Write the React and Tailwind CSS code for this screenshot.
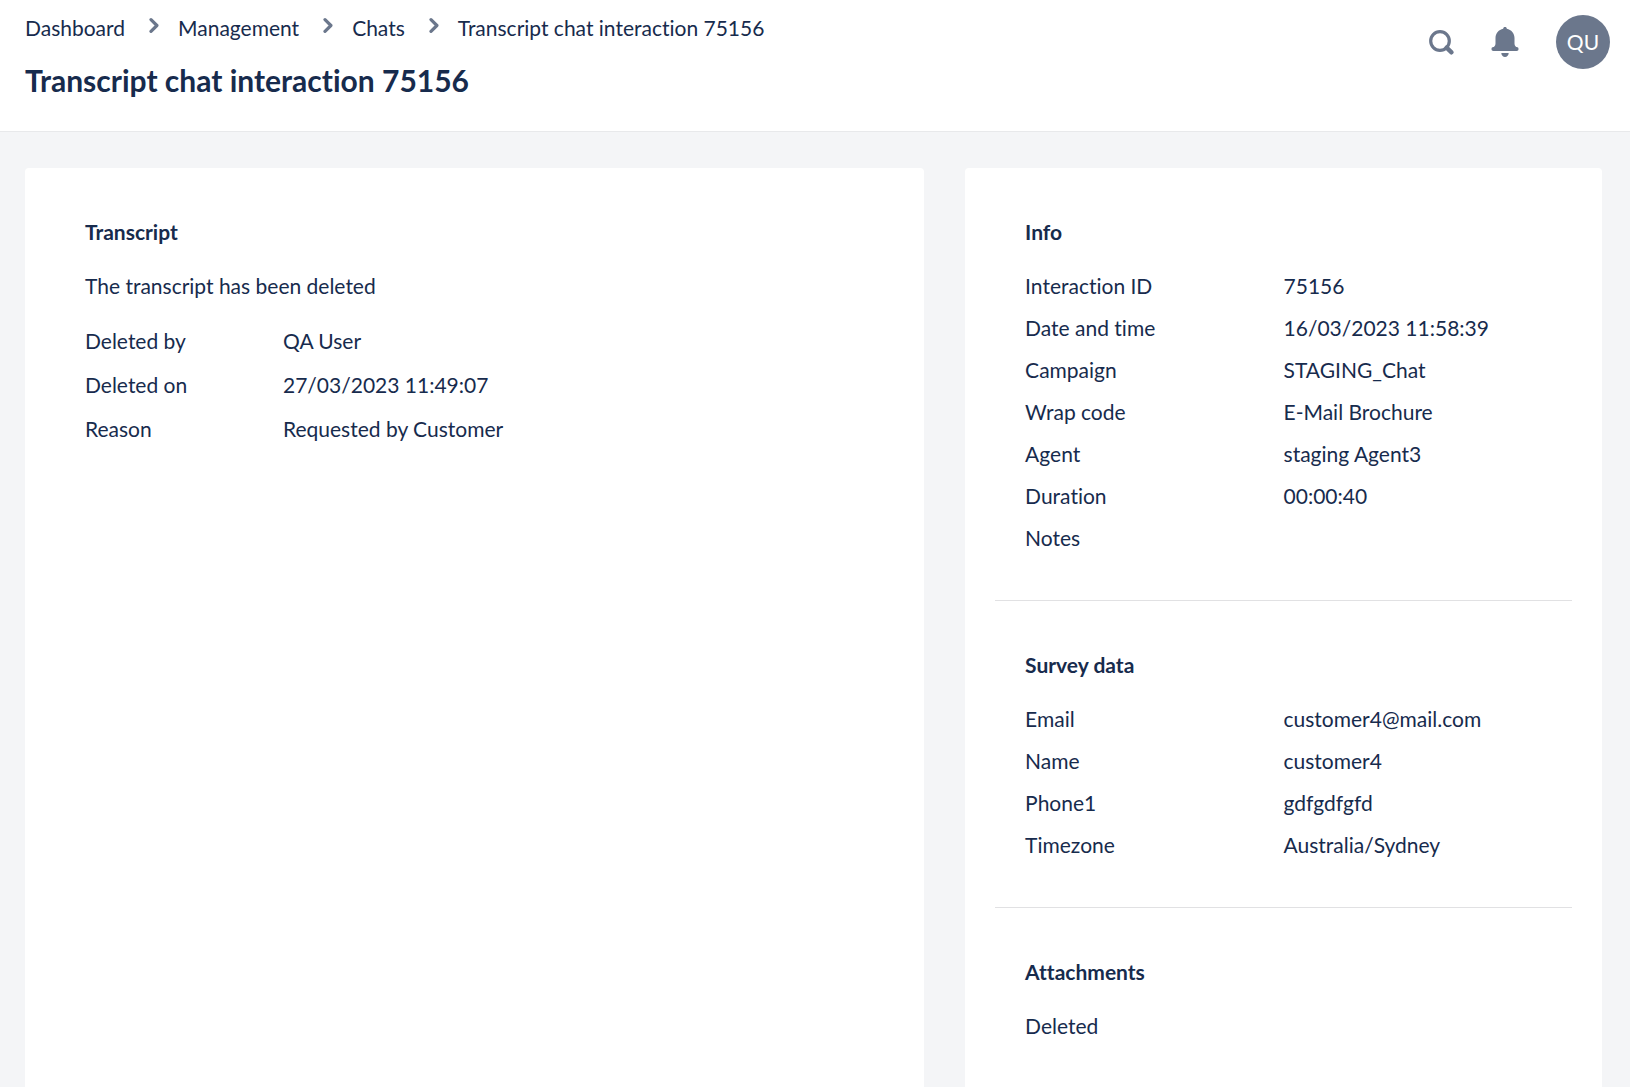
import React from 'react';

const breadcrumbs = ['Dashboard', 'Management', 'Chats', 'Transcript chat interaction 75156'];

const deletion = [
  ['Deleted by', 'QA User'],
  ['Deleted on', '27/03/2023 11:49:07'],
  ['Reason', 'Requested by Customer'],
];

const info = [
  ['Interaction ID', '75156'],
  ['Date and time', '16/03/2023 11:58:39'],
  ['Campaign', 'STAGING_Chat'],
  ['Wrap code', 'E-Mail Brochure'],
  ['Agent', 'staging Agent3'],
  ['Duration', '00:00:40'],
  ['Notes', ''],
];

const survey = [
  ['Email', 'customer4@mail.com'],
  ['Name', 'customer4'],
  ['Phone1', 'gdfgdfgfd'],
  ['Timezone', 'Australia/Sydney'],
];

function ChevronIcon() {
  return (
    <svg viewBox="0 0 10 16" className="mt-[17px] mr-[19px] ml-6 h-4 w-[10px] shrink-0 text-[#6b778c]" aria-hidden="true">
      <path d="M2 2.6 7.9 8.5 2 14.4" fill="none" stroke="currentColor" strokeWidth="3.2" strokeLinejoin="round" strokeLinecap="round" />
    </svg>
  );
}

function SearchIcon() {
  return (
    <svg viewBox="0 0 36 36" className="size-9" aria-hidden="true">
      <circle cx="16" cy="17" r="9.3" fill="none" stroke="currentColor" strokeWidth="3.2" />
      <path d="M22.600 23.600 27.500 28.300" fill="none" stroke="currentColor" strokeWidth="4.4" strokeLinecap="round" />
    </svg>
  );
}

function BellIcon() {
  return (
    <svg viewBox="0 0 36 36" className="size-9" fill="currentColor" aria-hidden="true">
      <path d="M18 3c1.1 0 1.8.7 1.8 1.7 4.500.9 7.700 4.600 7.700 9.300v5.500c0 1.500.6 2.700 1.700 3.500h.4a1.900 1.900 0 0 1 0 4H6.400a1.900 1.900 0 0 1 0-4h.4c1.100-.8 1.700-2 1.700-3.500V14c0-4.700 3.200-8.400 7.700-9.300C16.200 3.700 16.900 3 18 3z" />
      <path d="M14.300 29h7.400c0 2.200-1.600 4-3.700 4s-3.700-1.800-3.700-4z" />
    </svg>
  );
}

function Section({ title, children }) {
  return (
    <section className="border-b border-[#e1e1e3] px-[30px] pt-[49px] pb-[41px] last:border-b-0">
      <h2 className="mb-[18px] leading-[30px] font-bold">{title}</h2>
      {children}
    </section>
  );
}

function InfoList({ rows }) {
  return (
    <dl>
      {rows.map(([label, value]) => (
        <div key={label} className="grid grid-cols-2 leading-[42px]">
          <dt>{label}</dt>
          <dd>{value}</dd>
        </div>
      ))}
    </dl>
  );
}

export default function App() {
  return (
    <div className="flex min-h-screen flex-col bg-[#f4f5f7] font-['Lato',sans-serif] text-[21px] text-[#172b4d] [font-variant-ligatures:none]">
      <header className="flex items-start justify-between border-b border-[#e8e9eb] bg-white pr-5 pl-[25px]">
        <div className="pb-[33px]">
          <nav aria-label="Breadcrumb">
            <ol className="flex items-start">
              {breadcrumbs.map((crumb, index) => (
                <li key={crumb} className="flex items-start">
                  {index > 0 && <ChevronIcon />}
                  <a href="#" className="pt-[13px] leading-[30px]">{crumb}</a>
                </li>
              ))}
            </ol>
          </nav>
          <h1 className="mt-[19px] text-[30px] leading-9 font-bold">Transcript chat interaction 75156</h1>
        </div>

        <div className="flex items-center pt-[15px] text-[#6b778c]">
          <button type="button" aria-label="Search" className="mr-[27px]">
            <SearchIcon />
          </button>
          <button type="button" aria-label="Notifications" className="mr-[33px]">
            <BellIcon />
          </button>
          <button type="button" className="size-[54px] rounded-full bg-[#6b778c] text-white">
            QU
          </button>
        </div>
      </header>

      <main className="grid flex-1 grid-cols-[24fr_17fr] gap-[41px] pt-9 pr-7 pl-[25px]">
        <div className="rounded-t bg-white px-[30px]">
          <Section title="Transcript">
            <p className="mb-3 leading-[42px]">The transcript has been deleted</p>
            <dl>
              {deletion.map(([label, value]) => (
                <div key={label} className="flex leading-[44px]">
                  <dt className="w-[198px] shrink-0">{label}</dt>
                  <dd>{value}</dd>
                </div>
              ))}
            </dl>
          </Section>
        </div>

        <div className="rounded-t bg-white px-[30px]">
          <Section title="Info">
            <InfoList rows={info} />
          </Section>
          <Section title="Survey data">
            <InfoList rows={survey} />
          </Section>
          <Section title="Attachments">
            <p className="leading-[42px]">Deleted</p>
          </Section>
        </div>
      </main>
    </div>
  );
}
